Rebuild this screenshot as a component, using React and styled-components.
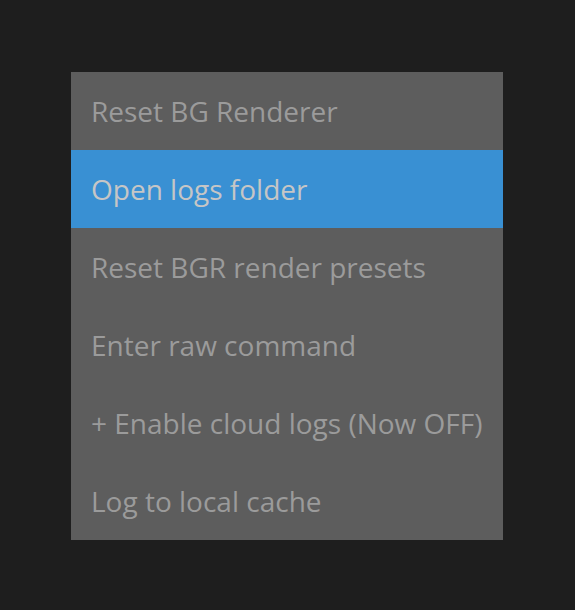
import React from "react";
import styled, { createGlobalStyle } from "styled-components";

const Global = createGlobalStyle`
  html, body { margin: 0; padding: 0; background: #1e1e1e; }
  body { width: 575px; height: 610px; overflow: hidden; }
`;

const Page = styled.div`
  padding: 72px 0 0 71px;
`;

const Menu = styled.ul`
  list-style: none;
  margin: 0;
  padding: 0;
  width: 432px;
  background: #5d5d5d;
`;

const Item = styled.li`
  height: 78px;
  display: flex;
  align-items: center;
  padding-left: 20px;
  font-family: "Open Sans", sans-serif;
  font-size: 28px;
  color: ${(p) => (p.$active ? "#c6c6c6" : "#9b9b9b")};
  background: ${(p) => (p.$active ? "#3990d3" : "transparent")};
  white-space: nowrap;
`;

const items = [
  "Reset BG Renderer",
  "Open logs folder",
  "Reset BGR render presets",
  "Enter raw command",
  "+ Enable cloud logs (Now OFF)",
  "Log to local cache",
];

export default function App() {
  return (
    <>
      <Global />
      <Page>
        <Menu>
          {items.map((t, i) => (
            <Item key={t} $active={i === 1}>
              {t}
            </Item>
          ))}
        </Menu>
      </Page>
    </>
  );
}
